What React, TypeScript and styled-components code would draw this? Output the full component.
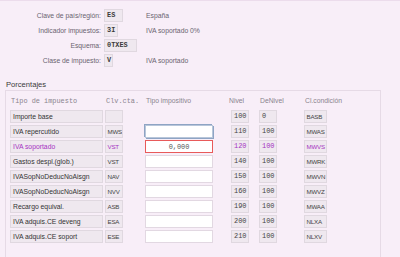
import React from 'react'
import styled, { createGlobalStyle } from 'styled-components';

const GlobalStyle = createGlobalStyle`
  html, body { margin: 0; padding: 0; background: #f8eef8; }
  body { font-family: "Liberation Sans", Arial, sans-serif; overflow: hidden; }
`;

type Row = { label: string; clv: string; nivel: string; de: string; cond: string; value?: string; state?: 'focus' | 'error'; active?: boolean; noInput?: boolean };

const rows: Row[] = [
    { label: 'Importe base', clv: '', nivel: '100', de: '0', cond: 'BASB', noInput: true },
    { label: 'IVA repercutido', clv: 'MWS', nivel: '110', de: '100', cond: 'MWAS', state: 'focus' },
    { label: 'IVA soportado', clv: 'VST', nivel: '120', de: '100', cond: 'MWVS', state: 'error', value: '0,000', active: true },
    { label: 'Gastos despl.(glob.)', clv: 'VST', nivel: '140', de: '100', cond: 'MWRK' },
    { label: 'IVASopNoDeducNoAisgn', clv: 'NAV', nivel: '150', de: '100', cond: 'MWVN' },
    { label: 'IVASopNoDeducNoAisgn', clv: 'NVV', nivel: '160', de: '100', cond: 'MWVZ' },
    { label: 'Recargo equival.', clv: 'ASB', nivel: '190', de: '100', cond: 'MWAA' },
    { label: 'IVA adquis.CE deveng', clv: 'ESA', nivel: '200', de: '100', cond: 'NLXA' },
    { label: 'IVA adquis.CE soport', clv: 'ESE', nivel: '210', de: '100', cond: 'NLXV' },
];

const App = () =>
    <Page>
        <GlobalStyle/>
        <HeaderGrid>
            <HLabel>Clave de país/región:</HLabel>
            <Field w={19}>ES</Field>
            <Desc>España</Desc>
            <HLabel>Indicador impuestos:</HLabel>
            <Field w={14}>3I</Field>
            <Desc>IVA soportado 0%</Desc>
            <HLabel>Esquema:</HLabel>
            <Field w={33}>0TXES</Field>
            <Desc/>
            <HLabel>Clase de impuesto:</HLabel>
            <Field w={9}>V</Field>
            <Desc>IVA soportado</Desc>
        </HeaderGrid>
        <SectionTitle>Porcentajes</SectionTitle>
        <Frame>
            <Table>
                <ColHead mono>Tipo de impuesto</ColHead>
                <ColHead mono>Clv.cta.</ColHead>
                <ColHead>Tipo impositivo</ColHead>
                <ColHead shift={-3}>Nivel</ColHead>
                <ColHead>DeNivel</ColHead>
                <ColHead>Cl.condición</ColHead>
                {rows.map((r, i) =>
                    <React.Fragment key={i}>
                        <LabelCell active={r.active}>{r.label}</LabelCell>
                        <Cell><Box w={18} active={r.active} small>{r.clv}</Box></Cell>
                        <Cell>{!r.noInput && <Input state={r.state} readOnly value={r.value ?? ''}/>}</Cell>
                        <Cell><Box w={18} active={r.active}>{r.nivel}</Box></Cell>
                        <Cell><Box w={18} active={r.active}>{r.de}</Box></Cell>
                        <Cell><Box w={23} active={r.active} small>{r.cond}</Box></Cell>
                    </React.Fragment>
                )}
            </Table>
        </Frame>
    </Page>;

const Page = styled.div`
  width: 400px;
  height: 257px;
  box-sizing: border-box;
  border-top: 1px solid #ecdcec;
  overflow: hidden;
`;

const HeaderGrid = styled.div`
  display: grid;
  grid-template-columns: 102px 44px auto;
  grid-auto-rows: 15px;
  padding-top: 7px;
  align-items: center;
`;

const HLabel = styled.div`
  text-align: right;
  font-size: 6.8px;
  color: #6a6470;
  padding-right: 1px;
`;

const Field = styled.div<{w: number}>`
  width: ${p => p.w}px;
  height: 13px;
  box-sizing: border-box;
  margin-left: 2px;
  background: #efe8ef;
  border: 1px solid #e0d8e0;
  font-family: "Liberation Mono", monospace;
  font-size: 6.9px;
  font-weight: bold;
  color: #3a3a3a;
  line-height: 11px;
  padding-left: 2px;
`;

const Desc = styled.div`
  font-size: 6.8px;
  color: #6a6470;
`;

const SectionTitle = styled.div`
  font-size: 7.6px;
  color: #3a3a3a;
  margin: 11px 0 0 6px;
  height: 11px;
  line-height: 11px;
`;

const Frame = styled.div`
  margin-left: 5px;
  width: 376px;
  height: 200px;
  box-sizing: border-box;
  border: 1px solid #e6dae6;
  border-bottom: none;
  padding: 3px 0 0 4px;
`;

const Table = styled.div`
  display: grid;
  grid-template-columns: 95px 40px 86px 28px 45px auto;
  grid-auto-rows: 15px;
  align-items: center;
`;

const ColHead = styled.div<{mono?: boolean; shift?: number}>`
  font-family: ${p => p.mono ? '"Liberation Mono", monospace' : '"Liberation Sans", Arial, sans-serif'};
  font-size: ${p => p.mono ? '6.9px' : '6.8px'};
  color: #8a848e;
  padding-left: 1px;
  margin-top: -2px;
  margin-left: ${p => p.shift ?? 0}px;
  white-space: nowrap;
`;

const Cell = styled.div`
  display: flex;
  align-items: center;
  height: 15px;
`;

const LabelCell = styled.div<{active?: boolean}>`
  width: 93px;
  height: 13px;
  box-sizing: border-box;
  background: #efe8ef;
  border: 1px solid #e0d8e0;
  font-size: 6.8px;
  line-height: 11px;
  padding-left: 2px;
  color: ${p => p.active ? '#a634c2' : '#333'};
  white-space: nowrap;
  overflow: hidden;
`;

const Box = styled.div<{w: number; active?: boolean; small?: boolean}>`
  width: ${p => p.w}px;
  height: 13px;
  box-sizing: border-box;
  background: #efe8ef;
  border: 1px solid #e0d8e0;
  font-family: ${p => p.small ? '"Liberation Sans", Arial, sans-serif' : '"Liberation Mono", monospace'};
  font-size: ${p => p.small ? '6.2px' : '6.9px'};
  letter-spacing: ${p => p.small ? '-0.2px' : '0'};
  line-height: 11px;
  padding-left: ${p => p.small ? '1.5px' : '2px'};
  color: ${p => p.active ? '#a634c2' : '#444'};
  white-space: nowrap;
  overflow: hidden;
`;

const Input = styled.input<{state?: 'focus' | 'error'}>`
  width: 68px;
  height: 13px;
  box-sizing: border-box;
  margin: 0;
  padding: 0;
  background: #fff;
  border: 1px solid ${p => p.state === 'error' ? '#e85a5a' : p.state === 'focus' ? '#b8c6da' : '#e2d8e2'};
  box-shadow: ${p => p.state === 'focus' ? '-1px -1px 0 0 #8ea4c4, 1px 1px 0 0 #8ea4c4' : 'none'};
  font-family: "Liberation Mono", monospace;
  font-size: 6.9px;
  color: #555;
  text-align: center;
  outline: none;
`;

export default App
